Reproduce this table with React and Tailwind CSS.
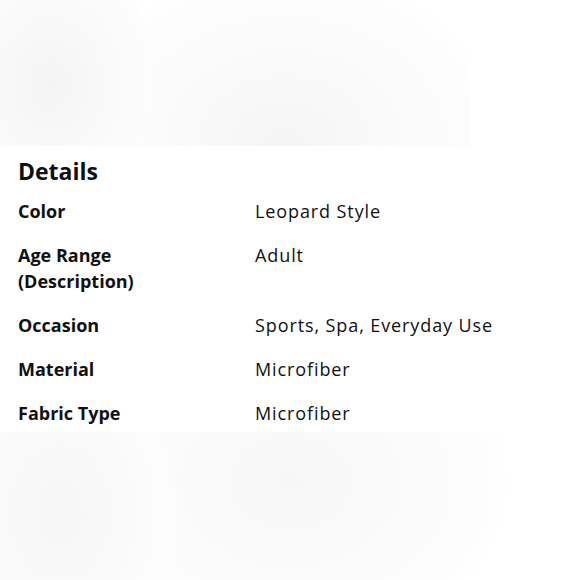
export default function App() {
  const rows = [
    ["Color", "Leopard Style"],
    ["Age Range\n(Description)", "Adult"],
    ["Occasion", "Sports, Spa, Everyday Use"],
    ["Material", "Microfiber"],
    ["Fabric Type", "Microfiber"],
  ];
  return (
    <div
      className="w-[580px] h-[580px] bg-white flex flex-col text-[#0f1111]"
      style={{ fontFamily: '"Open Sans", "Noto Sans", sans-serif' }}
    >
      <div className="h-[146px] w-[470px] bg-[radial-gradient(ellipse_110px_140px_at_50px_85px,#f4f4f4,#fafafa_60%,#fcfcfc_90%,transparent),radial-gradient(ellipse_220px_170px_at_285px_140px,#f5f5f5,#fbfbfb_60%,#fdfdfd_90%,transparent)]" />
      <div className="h-[286px] bg-white pl-[18px] pt-[10px]">
        <div className="text-[23px] font-bold leading-[30px]">Details</div>
        <div className="mt-[12px] grid grid-cols-[237px_1fr] gap-y-[18px] text-[18px] leading-[26px]">
          {rows.map(([k, v]) => (
            <div key={k} className="contents">
              <div className="font-bold whitespace-pre-line">{k}</div>
              <div className="tracking-[0.9px]">{v}</div>
            </div>
          ))}
        </div>
      </div>
      <div className="flex-1 bg-[radial-gradient(ellipse_120px_160px_at_60px_80px,#f6f6f6,#fafafa_60%,#fdfdfd_90%,transparent),radial-gradient(ellipse_220px_170px_at_290px_50px,#f7f7f7,#fbfbfb_60%,#fdfdfd_90%,transparent)]" />
    </div>
  );
}
